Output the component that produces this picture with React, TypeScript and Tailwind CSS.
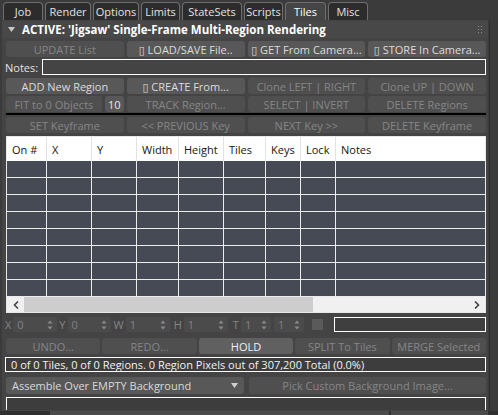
import clsx from 'clsx'

const tabs = [
  { name: 'Job', w: 'w-[40px]' },
  { name: 'Render', w: 'w-[46px]' },
  { name: 'Options', w: 'w-[46px]' },
  { name: 'Limits', w: 'w-[39px]' },
  { name: 'StateSets', w: 'w-[60px]' },
  { name: 'Scripts', w: 'w-[39px]' },
  { name: 'Tiles', w: 'w-[41px]', active: true },
  { name: 'Misc', w: 'w-[40px]' },
]

const columns = ['On #', 'X', 'Y', 'Width', 'Height', 'Tiles', 'Keys', 'Lock', 'Notes']

function Btn({
  label,
  disabled,
  className,
}: {
  label: string
  disabled?: boolean
  className?: string
}) {
  return (
    <div
      className={clsx(
        'flex h-[16px] items-center justify-center overflow-hidden whitespace-nowrap rounded-[3px]',
        disabled ? 'bg-[#4f4f4f] text-[#868686]' : 'bg-[#585858] text-[#dcdcdc]',
        className,
      )}
    >
      {label}
    </div>
  )
}

function Spinner({ value, className }: { value: string; className: string }) {
  return (
    <div
      className={clsx(
        'flex h-[15px] items-center justify-between rounded-[2px] bg-[#4b4b4b] pl-[4px] pr-[4px] text-[#828282]',
        className,
      )}
    >
      <span>{value}</span>
      <svg width="6" height="10" viewBox="0 0 6 10" className="fill-[#8a8a8a]">
        <path d="M3 0.5 L5.5 3.5 H0.5 Z" />
        <path d="M3 9.5 L5.5 6.5 H0.5 Z" />
      </svg>
    </div>
  )
}

function Label({ t }: { t: string }) {
  return <span className="text-[#848484]">{t}</span>
}

export default function App() {
  return (
    <div
      className="flex h-[415px] w-[498px] flex-col overflow-hidden bg-[#3b3b3b] text-[11px] leading-none"
      style={{ fontFamily: '"Open Sans", "DejaVu Sans", sans-serif' }}
    >
      {/* tab strip */}
      <div className="flex h-[20px] shrink-0 items-end gap-[2px] pl-[3px]">
        {tabs.map((t) => (
          <div
            key={t.name}
            className={clsx(
              'flex h-[18px] items-center justify-center rounded-t-[4px] border border-b-0 border-[#6e6e6e]',
              t.w,
              t.active ? 'bg-[#454545] text-white' : 'bg-[#2c2c2c] text-[#e2e2e2]',
            )}
          >
            {t.name}
          </div>
        ))}
      </div>

      <div className="flex flex-1">
        {/* rollout */}
        <div className="ml-[2px] flex w-[486px] flex-col bg-[#444444] pb-[1px] pl-[4px] pr-[2px]">
          <div className="-ml-[4px] -mr-[2px] mt-[1px] flex h-[17px] items-center bg-[#484848] pl-[6px] pr-[4px]">
            <svg width="7" height="5" viewBox="0 0 7 5" className="fill-[#c8c8c8]">
              <path d="M0 0 H7 L3.5 5 Z" />
            </svg>
            <span className="ml-[7px] text-[11.5px] font-bold text-white">
              ACTIVE: 'Jigsaw' Single-Frame Multi-Region Rendering
            </span>
            <div className="ml-auto mr-[2px] grid grid-cols-2 gap-[2px]">
              {[0, 1, 2, 3, 4, 5].map((i) => (
                <div key={i} className="h-[1px] w-[1px] bg-[#8c8c8c]" />
              ))}
            </div>
          </div>

          <div className="mt-[3px] grid grid-cols-4 gap-[3px]">
            <Btn label="UPDATE List" disabled />
            <Btn label="▯ LOAD/SAVE File.." />
            <Btn label="▯ GET From Camera..." />
            <Btn label="▯ STORE In Camera..." />
          </div>

          <div className="mt-[2px] flex h-[16px] items-center">
            <span className="-ml-[1px] w-[37px] text-[#e2e2e2]">Notes:</span>
            <div className="h-[16px] flex-1 border border-white bg-[#444444]" />
          </div>

          <div className="mt-[3px] grid grid-cols-4 gap-[3px]">
            <Btn label="ADD New Region" />
            <Btn label="▯ CREATE From..." />
            <Btn label="Clone LEFT | RIGHT" disabled />
            <Btn label="Clone UP | DOWN" disabled />
          </div>

          <div className="mt-[2px] grid grid-cols-4 gap-[3px]">
            <div className="flex gap-[3px]">
              <Btn label="FIT to 0 Objects" disabled className="flex-1" />
              <Btn label="10" className="w-[19px] text-[#e8e8e8]" />
            </div>
            <Btn label="TRACK Region..." disabled />
            <Btn label="SELECT | INVERT" disabled />
            <Btn label="DELETE Regions" disabled />
          </div>

          <div className="mt-[1px] h-[2px] bg-black" />

          <div className="mt-[2px] grid grid-cols-4 gap-[3px]">
            <Btn label="SET Keyframe" disabled />
            <Btn label="<< PREVIOUS Key" disabled />
            <Btn label="NEXT Key >>" disabled />
            <Btn label="DELETE Keyframe" disabled />
          </div>

          {/* region table */}
          <div className="mt-[3px] flex flex-col border border-[#e8e8e8] bg-white">
            <div className="grid h-[24px] grid-cols-[40px_45px_45px_42px_45px_42px_35px_35px_1fr] text-[#151515]">
              {columns.map((c) => (
                <div key={c} className="flex items-center border-r border-[#e2e2e2] pl-[5px] last:border-r-0">
                  {c}
                </div>
              ))}
            </div>
            {[0, 1, 2, 3, 4, 5, 6, 7].map((r) => (
              <div
                key={r}
                className="grid h-[17px] grid-cols-[40px_45px_45px_42px_45px_42px_35px_35px_1fr] border-b border-[#ececec]"
              >
                {columns.map((c) => (
                  <div key={c} className="bg-[#454a55] border-r border-[#ececec] last:border-r-0" />
                ))}
              </div>
            ))}
            <div className="flex h-[15px] items-center bg-[#f0f0f0]">
              <div className="flex w-[17px] items-center justify-center">
                <svg width="6" height="8" viewBox="0 0 6 8" className="stroke-[#444]" fill="none" strokeWidth="1.6">
                  <path d="M5 0.5 L1.5 4 L5 7.5" />
                </svg>
              </div>
              <div className="h-[15px] w-[289px] bg-[#cdcdcd]" />
              <div className="flex flex-1 items-center justify-end pr-[5px]">
                <svg width="6" height="8" viewBox="0 0 6 8" className="stroke-[#444]" fill="none" strokeWidth="1.6">
                  <path d="M1 0.5 L4.5 4 L1 7.5" />
                </svg>
              </div>
            </div>
          </div>

          {/* spinners */}
          <div className="-ml-[1px] mt-[4px] flex h-[15px] items-center">
            <Label t="X" />
            <Spinner value="0" className="ml-[2px] w-[44px]" />
            <span className="ml-[2px]"><Label t="Y" /></span>
            <Spinner value="0" className="ml-[2px] w-[43px]" />
            <span className="ml-[3px]"><Label t="W" /></span>
            <Spinner value="1" className="ml-[2px] w-[44px]" />
            <span className="ml-[4px]"><Label t="H" /></span>
            <Spinner value="1" className="ml-[2px] w-[44px]" />
            <span className="ml-[5px]"><Label t="T" /></span>
            <Spinner value="1" className="ml-[2px] w-[30px]" />
            <Spinner value="1" className="ml-[3px] w-[30px]" />
            <div className="ml-[8px] h-[11px] w-[11px] bg-[#5a5a5a]" />
            <div className="ml-[11px] h-[15px] flex-1 border border-white bg-[#3f3f3f]" />
          </div>

          <div className="mt-[6px] grid grid-cols-5 gap-[2px]">
            <Btn label="UNDO..." disabled />
            <Btn label="REDO..." disabled />
            <Btn label="HOLD" className="bg-[#606060] text-[#f0f0f0]" />
            <Btn label="SPLIT To Tiles" disabled />
            <Btn label="MERGE Selected" disabled />
          </div>

          <div className="-ml-[1px] mt-[3px] flex h-[15px] items-center border border-white bg-[#3d3d3d] pl-[5px] text-[#f2f2f2]">
            0 of 0 Tiles, 0 of 0 Regions. 0 Region Pixels out of 307,200 Total (0.0%)
          </div>

          <div className="mt-[5px] grid h-[17px] grid-cols-[238px_1fr] gap-[5px]">
            <div className="flex items-center rounded-[3px] bg-[#585858] pl-[6px] pr-[6px] text-[#d8d8d8]">
              <span>Assemble Over EMPTY Background</span>
              <svg width="7" height="5" viewBox="0 0 7 5" className="ml-auto fill-[#d0d0d0]">
                <path d="M0 0 H7 L3.5 5 Z" />
              </svg>
            </div>
            <Btn label="Pick Custom Background Image..." disabled className="h-[17px]" />
          </div>

          <div className="mt-[3px] flex-1 border border-b-0 border-white bg-[#3d3d3d]" />
        </div>
        <div className="ml-[1px] flex-1 border-l border-[#2e2e2e] bg-[#3a3a3a]" />
      </div>

      <div className="flex h-[4px] shrink-0 bg-[#2f2f2f]">
        <div className="ml-[50px] w-[339px] bg-[#4a4a4a]" />
        <div className="ml-[2px] w-[97px] bg-[#4a4a4a]" />
      </div>
    </div>
  )
}
